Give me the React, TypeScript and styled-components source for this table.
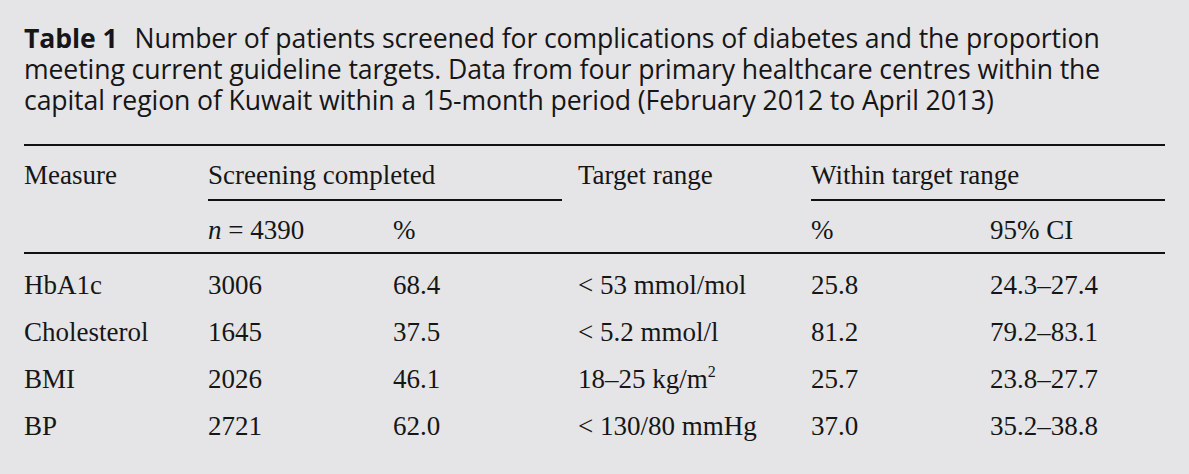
import styled, { createGlobalStyle } from "styled-components";

const GlobalStyle = createGlobalStyle`
  html, body {
    margin: 0;
    padding: 0;
    background: #e5e5e7;
  }
`;

const Page = styled.div`
  width: 1189px;
  height: 474px;
  box-sizing: border-box;
  padding: 23px 24px 0 24px;
  background: #e5e5e7;
  color: #161616;
  overflow: hidden;
`;

// caption: one block, lines broken where the print layout breaks them
const Caption = styled.p`
  margin: 0 0 28px 0;
  font-family: "Open Sans", "DejaVu Sans", sans-serif;
  font-size: 26.6px;
  line-height: 31px;
  letter-spacing: -0.1px;
  white-space: nowrap;
`;

const Label = styled.b`
  font-weight: 700;
  margin-right: 17px;
`;

const Grid = styled.div`
  display: grid;
  grid-template-columns: 184px 185px 185px 233px 179px 175px;
  border-top: 2px solid #111;
  font-family: "Liberation Serif", "Times New Roman", serif;
  font-size: 27px;
  line-height: 30px;
`;

const HeadCell = styled.div<{ $span?: number; $rule?: boolean; $inset?: number }>`
  grid-column: span ${(p) => p.$span ?? 1};
  padding: 14px 0 9px 0;
  margin-right: ${(p) => p.$inset ?? 0}px;
  border-bottom: 2px solid ${(p) => (p.$rule ? "#111" : "transparent")};
`;

const SubCell = styled.div`
  padding: 14px 0 7px 0;
  border-bottom: 2px solid #111;
`;

const Cell = styled.div`
  padding: 16px 0 1px 0;
  white-space: nowrap;
`;

const Sup = styled.sup`
  font-size: 16px;
  line-height: 0;
  vertical-align: 11px;
`;

type Row = [string, string, string, React.ReactNode, string, string];

const rows: Row[] = [
  ["HbA1c", "3006", "68.4", "< 53 mmol/mol", "25.8", "24.3–27.4"],
  ["Cholesterol", "1645", "37.5", "< 5.2 mmol/l", "81.2", "79.2–83.1"],
  [
    "BMI",
    "2026",
    "46.1",
    <>
      18–25 kg/m<Sup>2</Sup>
    </>,
    "25.7",
    "23.8–27.7",
  ],
  ["BP", "2721", "62.0", "< 130/80 mmHg", "37.0", "35.2–38.8"],
];

export default function App() {
  return (
    <>
      <GlobalStyle />
      <Page>
        <Caption>
          <Label>Table 1</Label>Number of patients screened for complications of diabetes and the proportion
          <br />
          meeting current guideline targets. Data from four primary healthcare centres within the
          <br />
          capital region of Kuwait within a 15-month period (February 2012 to April 2013)
        </Caption>
        <Grid>
          <HeadCell>Measure</HeadCell>
          <HeadCell $span={2} $rule $inset={16}>
            Screening completed
          </HeadCell>
          <HeadCell>Target range</HeadCell>
          <HeadCell $span={2} $rule>
            Within target range
          </HeadCell>

          <SubCell />
          <SubCell>
            <i>n</i> = 4390
          </SubCell>
          <SubCell>%</SubCell>
          <SubCell />
          <SubCell>%</SubCell>
          <SubCell>95% CI</SubCell>

          {rows.map((row, i) =>
            row.map((value, j) => <Cell key={`${i}-${j}`}>{value}</Cell>)
          )}
        </Grid>
      </Page>
    </>
  );
}
